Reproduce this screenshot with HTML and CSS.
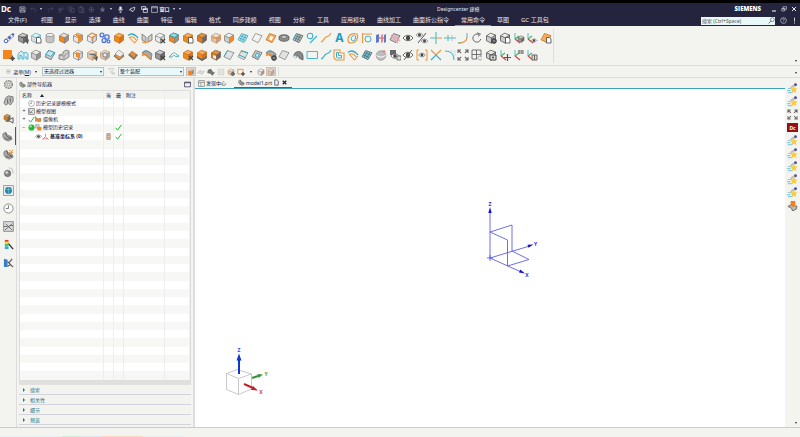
FILE: index.html
```html
<!DOCTYPE html>
<html lang="zh-CN">
<head>
<meta charset="utf-8">
<title>Designcenter 建模</title>
<link rel="stylesheet" href="styles.css">
</head>
<body>
<svg class="sprites" aria-hidden="true">
  <symbol id="cube" viewBox="0 0 12 12"><path class="t" d="M1.5 3.8 5.5 1.2l5 1.8-4 2.8z"/><path class="l" d="M1.5 3.8l5 2v5.4l-5-2.4z"/><path class="r" d="M6.500 5.800l4-2.800v5.200l-4 3z"/><path class="e" d="M1.500 3.800 5.500 1.200l5 1.800v5.200l-4 3-5-2.400zM1.500 3.800l5 2 4-2.800M6.500 5.800v5.400"/></symbol>
  <symbol id="sheet" viewBox="0 0 12 12"><path class="t" d="M4.500 1.500l6.500 2.200-4 7-6-3z"/><path class="e" d="M4.500 1.500l6.500 2.200-4 7-6-3z"/></symbol>
  <symbol id="mesh" viewBox="0 0 12 12"><path class="t" d="M4.500 1.500l6.500 2.200-4 7-6-3z"/><path class="e" d="M4.500 1.500l6.500 2.200-4 7-6-3zM6.500 2.200l-3.500 6.600M9 3l-4 6.800M3.300 3.700l6.400 2.400M2.100 5.800l6.200 2.600"/></symbol>
  <symbol id="cyl" viewBox="0 0 12 12"><path d="M2 3v6c0 2.400 8 2.400 8 0V3" fill="#c4c4c4" stroke="#888" stroke-width=".7"/><ellipse cx="6" cy="3" rx="4" ry="1.600" fill="#eee" stroke="#888" stroke-width=".7"/></symbol>
  <symbol id="ox" viewBox="0 0 12 12"><path d="M7 7l4 4M11 7l-4 4" stroke="#444" stroke-width="1.200"/></symbol>
  <symbol id="odoc" viewBox="0 0 12 12"><path d="M6.500 5.500h3l1.500 1.500v4h-4.500z" fill="#fff" stroke="#444" stroke-width=".8"/></symbol>
  <symbol id="ogear" viewBox="0 0 12 12"><circle cx="9" cy="9" r="2" fill="#ddd" stroke="#444" stroke-width="1.300"/><path d="M9 6v6M6 9h6" stroke="#444" stroke-width=".7"/></symbol>
  <symbol id="oarr" viewBox="0 0 12 12"><path d="M4 5.500c5-2 7 2 6.500 6M8 8l2.500 3 1-3.500" fill="none" stroke="#555" stroke-width="1.100"/></symbol>
  <symbol id="eye" viewBox="0 0 12 12"><path d="M1 6c2.500-3.600 7.500-3.600 10 0-2.500 3.600-7.500 3.600-10 0z" fill="#fff" stroke="#555" stroke-width=".9"/><circle cx="6" cy="6" r="2.200" fill="#444"/></symbol>
  <symbol id="axis" viewBox="0 0 12 12"><path d="M2 1v6" stroke="#52b8cc" stroke-width="1"/><path d="M2 7l4-3" stroke="#4db45a" stroke-width="1.200"/><path d="M2 7l5 4" stroke="#d8434a" stroke-width="1.200"/></symbol>
  <symbol id="expand" viewBox="0 0 12 12"><path d="M1 4V1h3M8 1h3v3M11 8v3H8M4 11H1V8M1 1l3.200 3.200M11 1 7.800 4.200M11 11 7.800 7.800M1 11l3.200-3.200" fill="none" stroke="#666" stroke-width="1.100"/></symbol>
  <symbol id="tick" viewBox="0 0 12 12"><path d="M1 6.500l3.500 4L11 1.500" fill="none" stroke="#19c332" stroke-width="1.700"/></symbol>
  <symbol id="gear" viewBox="0 0 12 12"><circle cx="6" cy="6" r="4.300" fill="none" stroke="#8b8b8b" stroke-width="1.400" stroke-dasharray="2 .7"/><circle cx="6" cy="6" r="3.200" fill="none" stroke="#888" stroke-width=".7"/><circle cx="6" cy="6" r="1.500" fill="none" stroke="#888" stroke-width=".9"/></symbol>
  <symbol id="clock" viewBox="0 0 12 12"><circle cx="6" cy="6" r="5" fill="#fff" stroke="#777" stroke-width=".9"/><path d="M6 2.500V6H3" fill="none" stroke="#666" stroke-width=".9"/></symbol>
  <symbol id="part" viewBox="0 0 12 12"><path d="M1 3l3-1.500 2 3 4 1.500 1 3-4 2-4-1.500-2-3z" fill="#aaa" stroke="#666" stroke-width=".7"/><path d="M4 1.500l1 4 5 2.500M3 7.500l3 1.500 4-1" fill="none" stroke="#555" stroke-width=".9"/></symbol>
  <symbol id="role" viewBox="0 0 12 12"><path d="M1 6h4M0 8.300h4M1 10.500h5" stroke="#8accE4" stroke-width="1.200"/><path d="M3 4.500l4-3 2 2-4 2z" fill="#c4beb0"/><circle cx="9.300" cy="2" r="1.600" fill="#4b4fa5"/><path d="M7.500 3.500l1.200 2.300 2.800.2-1.900 1.900.7 3-2.800-1.400-2.700 1.400.6-3-1.900-1.900 2.800-.2z" fill="#fccd3a"/></symbol>
  <symbol id="fan" viewBox="0 0 12 12"><path d="M1 3.500c3.500-3 7-1 10 2.500" fill="none" stroke="#31a9c4" stroke-width="1.300"/><path d="M2.500 5.500c2.500-1.500 5 0 6.500 2.500M2 5l5.500 6M7.500 11 11 7" fill="none" stroke="#ed963d" stroke-width="1.100"/></symbol>
  <symbol id="swirl" viewBox="0 0 12 12"><path d="M1 4c2-3 6-3 10 1l-1 6-3-3z" fill="#aaa" stroke="#666" stroke-width=".7"/><path d="M1 6.500c3-2 5-1 7 3" fill="none" stroke="#ef8b27" stroke-width="1.600"/><path d="M2 3c3-2 6-1 8 2" fill="none" stroke="#38adc6" stroke-width="1"/></symbol>
  <symbol id="turn" viewBox="0 0 12 12"><path d="M9.800 7a4 4 0 1 1-2-4.400M6 .8l3.500 1.300L7 4.500" fill="none" stroke="#666" stroke-width="1"/></symbol>
</svg>

<header class="chrome">
  <div class="titlebar">
    <strong class="logo">Dc</strong>
    <div class="quick">
      <button class="wide" aria-label="保存"><svg viewBox="0 0 12 12" stroke="#c9c9d6"><path d="M1.500 1.500h8l1 1v8h-9zM3.500 1.500v3h5v-3M3 10.500v-4h6v4M4 8h4"/></svg></button>
      <button aria-label="撤销"><svg viewBox="0 0 12 12" stroke="#53536c"><path d="M4 2 1.500 4.500 4 7M1.500 4.500h5c5 0 4 5 1 6"/></svg></button>
      <i class="dot"></i>
      <button class="wide" aria-label="重做"><svg viewBox="0 0 12 12" stroke="#53536c"><path d="M8 2l2.500 2.500L8 7M10.500 4.500h-5c-5 0-4 5-1 6"/></svg></button>
      <button aria-label="剪切"><svg viewBox="0 0 12 12" stroke="#53536c"><path d="M8 1 4 9M2 6l9-1"/><circle cx="3" cy="9.500" r="1.500"/><circle cx="2.500" cy="5.500" r="1.500"/></svg></button>
      <button aria-label="复制"><svg viewBox="0 0 12 12" stroke="#53536c"><path d="M1.500 1.500h5v7h-5zM4.500 4h6v7h-6z"/></svg></button>
      <button aria-label="粘贴"><svg viewBox="0 0 12 12" stroke="#53536c"><path d="M1.500 2h7v9h-7zM3.500 1h3v2h-3zM5.500 5h5v6h-5z"/></svg></button>
      <button aria-label="重复命令"><svg viewBox="0 0 12 12" stroke="#53536c"><path d="M6 1v10M1 6h10M3 3h6v6H3z"/></svg></button>
      <button class="wide" aria-label="收藏"><svg viewBox="0 0 12 12"><path d="M6 1l1.500 3.500 3.500.2-2.700 2.400.9 3.600L6 8.700l-3.200 2 .9-3.600L1 4.700l3.500-.2z" fill="#66667c"/></svg></button>
      <i class="dot"></i>
      <button class="wide" aria-label="语音"><svg viewBox="0 0 12 12" stroke="#e8e8ee"><path d="M4.500 1.500h3v5h-3z" fill="#e8e8ee"/><path d="M2.500 5c0 5 7 5 7 0M6 9v2.500M4 11.500h4"/></svg></button>
      <button class="wide" aria-label="触控"><svg viewBox="0 0 12 12" stroke="#e8e8ee" stroke-width="1.300"><path d="M1 7c0-3 4-3 6-4l3-1-1 5c-2 3-5 2-5 0zM5 10l2-2"/></svg></button>
      <button class="wide" aria-label="切换窗口"><svg viewBox="0 0 12 12" stroke="#e8e8ee" stroke-width="1.300"><path d="M1 1h7v5H1zM4 4h7v7H4zM4 6h7"/></svg></button>
      <button class="window" aria-label="窗口菜单"><svg viewBox="0 0 12 12" stroke="#e8e8ee"><path d="M1 1h10v10H1zM1 3h10"/></svg>窗口</button>
      <i class="dot"></i><i class="dot"></i>
    </div>
    <h1>Designcenter 建模</h1>
    <div class="winctl">
      <strong>SIEMENS</strong>
      <button aria-label="最小化"><svg viewBox="0 0 12 12" stroke="#fff" stroke-width="2"><path d="M2 10h8"/></svg></button>
      <button aria-label="还原"><svg viewBox="0 0 12 12" stroke="#fff"><path d="M4 1.500h7v5H4zM1.500 5h6v5h-6z"/></svg></button>
      <button aria-label="关闭"><svg viewBox="0 0 12 12" stroke="#fff" stroke-width="1.800"><path d="M2 2l8 8M10 2l-8 8"/></svg></button>
    </div>
  </div>
  <div class="menubar">
    <nav>
      <button class="file">文件(F)</button><button>视图</button><button>显示</button><button>选择</button><button>曲线</button><button>曲面</button><button>特征</button><button>编辑</button><button>格式</button><button>同步建模</button><button>视图</button><button>分析</button><button>工具</button><button>应用模块</button><button>曲线加工</button><button>曲面拆公指令</button><button class="active">常用命令</button><button>草图</button><button>GC 工具包</button>
    </nav>
    <div class="find">
      <input type="search" aria-label="搜索" placeholder="搜索 (Ctrl+Space)">
      <svg viewBox="0 0 12 12"><circle cx="7.500" cy="4.500" r="3.300" fill="none" stroke="#444"/><path d="M5 7l-4 4" stroke="#444" stroke-width="1.300"/></svg>
    </div>
    <button class="help" aria-label="帮助"><svg viewBox="0 0 12 12"><circle cx="6" cy="6" r="5" fill="none" stroke="#ddd"/><path d="M4.500 4.500c0-2 3-2 3 0 0 1-1.500 1-1.500 2.500M6 8v1.200" fill="none" stroke="#ddd"/></svg></button>
    <button class="help" aria-label="提示"><svg viewBox="0 0 12 12"><path d="M6 1v7M6 9.500v2" stroke="#ddd" stroke-width="1.500"/></svg></button>
  </div>
</header>

<section class="ribbon" aria-label="常用命令">
  <div class="tools">
    <button aria-label="基准"><svg viewBox="0 0 12 12"><path d="M2 8l7-6M4 10l7-6" stroke="#999"/><circle cx="3" cy="9" r="1.800" fill="#fff" stroke="#3f62ce"/><circle cx="6.500" cy="5.500" r="1.500" fill="#3f62ce"/><circle cx="10" cy="2.500" r="1.200" fill="#3f62ce"/></svg></button>
    <button aria-label="草图"><svg viewBox="0 0 12 12" class="dark"><use href="#cube"/><use href="#oarr"/></svg></button>
    <button aria-label="抽取"><svg viewBox="0 0 12 12" class="cyan"><use href="#cube"/><use href="#odoc"/></svg></button>
    <button aria-label="圆柱"><svg viewBox="0 0 12 12"><use href="#cyl"/></svg></button>
    <button aria-label="拉伸"><svg viewBox="0 0 12 12" class="mix"><use href="#cube"/></svg></button>
    <button aria-label="求和"><svg viewBox="0 0 12 12"><g class="wire"><use href="#cube"/></g><path d="M4 2l6 1v5l-4 2V5L4 4z" fill="#f28a25"/></svg></button>
    <button aria-label="边倒圆"><svg viewBox="0 0 12 12" class="wire"><use href="#cube"/><path d="M2 4l4-3 5 2-5 2v4" fill="none" stroke="#ed8a2d"/></svg></button>
    <button aria-label="阵列"><svg viewBox="0 0 12 12" fill="#dfe4fa" stroke="#4068d6" stroke-width="1.100"><circle cx="3" cy="3" r="2"/><circle cx="8" cy="5" r="2.200"/><circle cx="5" cy="8.500" r="2"/><circle cx="9.500" cy="9.500" r="1.500"/></svg></button>
    <button aria-label="长方体"><svg viewBox="0 0 12 12" class="orange"><use href="#cube"/></svg></button>
    <button aria-label="扫掠"><svg viewBox="0 0 12 12"><use href="#fan"/></svg></button>
    <button aria-label="镜像"><svg viewBox="0 0 12 12"><path d="M1 2l4 3v5L1 8zM11 2L7 5v5l4-2z" fill="#ccc" stroke="#777" stroke-width=".8"/><path d="M1 10l4 1 6-3" fill="none" stroke="#ef8b27"/></svg></button>
    <button aria-label="删除面"><svg viewBox="0 0 12 12" class="wire"><use href="#cube"/><use href="#ox"/></svg></button>
    <button aria-label="偏置面"><svg viewBox="0 0 12 12" class="mix"><use href="#cube"/><path d="M1.500 3.500 5.500 1l5 2-4 2.500z" fill="#9edae6" stroke="#279fb9"/></svg></button>
    <button aria-label="复制面"><svg viewBox="0 0 12 12" class="orange"><use href="#cube"/><use href="#odoc"/></svg></button>
    <button aria-label="替换面"><svg viewBox="0 0 12 12" class="burnt"><use href="#cube"/></svg></button>
    <button aria-label="阵列面"><svg viewBox="0 0 12 12" class="rim"><use href="#cube"/><path d="M2 6h9" stroke="#ed8a2d"/></svg></button>
    <button aria-label="拔模"><svg viewBox="0 0 12 12" class="gray"><use href="#cube"/><path d="M6.500 6l4-3v5l-4 3z" fill="#f28a25"/></svg></button>
    <button aria-label="通过网格"><svg viewBox="0 0 12 12" class="sea"><use href="#mesh"/></svg></button>
    <button aria-label="有界平面"><svg viewBox="0 0 12 12" class="wire"><use href="#sheet"/></svg></button>
    <button aria-label="修剪片体"><svg viewBox="0 0 12 12" class="orange"><use href="#sheet"/><path d="M5.500 4l3 1-2 3.500-2.500-1z" fill="#fff"/></svg></button>
    <button aria-label="管"><svg viewBox="0 0 12 12"><path d="M1 5c0-3 10-3 10 0v2c0 3-10 3-10 0z" fill="#8b8b8b" stroke="#555" stroke-width=".8"/><ellipse cx="6" cy="5" rx="3" ry="1.200" fill="#eee" stroke="#555" stroke-width=".7"/></svg></button>
    <button aria-label="缝合"><svg viewBox="0 0 12 12" class="dark"><use href="#mesh"/><path d="M4.500 1.500l-3 5.500M8 3l-3 6" stroke="#35abc6"/></svg></button>
    <button aria-label="直线和圆"><svg viewBox="0 0 12 12" fill="none" stroke="#3bb0cb" stroke-width="1.100"><circle cx="4" cy="4" r="2.800"/><path d="M4 11l7-7"/></svg></button>
    <button aria-label="艺术样条"><svg viewBox="0 0 12 12" fill="none" stroke="#ed963d" stroke-width="1.100"><path d="M1 10c3-1 3-4 5-5s3 0 5-4"/></svg></button>
    <button class="letter">A</button>
    <button aria-label="桥接曲线"><svg viewBox="0 0 12 12" fill="none"><path d="M1 8c0-6 5-7 9-6 2 4-1 9-6 9-2 0-3-1-3-3z" stroke="#ed963d" stroke-width="1.200"/><path d="M4 7c0-3 3-4 4.500-3 1 3-1 5-3 5z" stroke="#3bb0cb"/></svg></button>
    <button aria-label="投影曲线"><svg viewBox="0 0 12 12" fill="none"><path d="M1.500 1v10M1 2h10" stroke="#ed963d" stroke-width="1.100"/><circle cx="7" cy="7" r="3" stroke="#3bb0cb"/></svg></button>
    <button aria-label="测量"><svg viewBox="0 0 12 12"><path d="M1 3l3-1v8l-3 1z" fill="#6379c7"/><path d="M4 6h5" stroke="#d23b41"/><path d="M6 3l2-1v8l-2 1z" fill="#e8868b"/><path d="M9 3l2-1v8l-2 1z" fill="#6379c7"/></svg></button>
    <button aria-label="截面分析"><svg viewBox="0 0 12 12" class="dark"><use href="#sheet"/><path d="M2 3l7 8M4 2l7 7" stroke="#eaa6b0" stroke-width="1.500"/></svg></button>
    <button aria-label="显示"><svg viewBox="0 0 12 12"><use href="#eye"/></svg></button>
    <button aria-label="反转显示"><svg viewBox="0 0 12 12"><use href="#eye" x="-1" y="-1" width="9" height="8"/><use href="#eye" x="4" y="5" width="9" height="8"/><path d="M10 1 2 11" stroke="#555"/></svg></button>
    <button aria-label="点"><svg viewBox="0 0 12 12"><path d="M6 0v12M0 6h6" stroke="#4ab8d0" stroke-width="1.100"/><path d="M6 6h6" stroke="#ed963d"/></svg></button>
    <button aria-label="分割曲线"><svg viewBox="0 0 12 12" fill="none"><path d="M0 6h12M4 3v6" stroke="#4ab8d0"/><path d="M8 3v6" stroke="#bbb"/></svg></button>
    <button aria-label="圆角"><svg viewBox="0 0 12 12" fill="none"><path d="M1 11c6 0 9-2 9-6" stroke="#ed963d" stroke-width="1.100"/><path d="M10 6V1M1 11h3" stroke="#4ab8d0"/></svg></button>
    <button aria-label="刷新"><svg viewBox="0 0 12 12"><use href="#turn"/></svg></button>
    <button aria-label="组件设置"><svg viewBox="0 0 12 12" class="ink"><use href="#cube"/><use href="#ogear"/></svg></button>
    <button aria-label="组件复制"><svg viewBox="0 0 12 12" class="ink"><use href="#cube"/><use href="#odoc"/></svg></button>
    <button aria-label="移动组件"><svg viewBox="0 0 12 12" class="dark"><use href="#axis"/><use href="#cube" x="4" y="3" width="8" height="8"/></svg></button>
    <button aria-label="显示坐标系"><svg viewBox="0 0 12 12"><use href="#axis"/><use href="#eye" x="4" y="5" width="8" height="7"/></svg></button>
    <button aria-label="替换"><svg viewBox="0 0 12 12" class="orange"><use href="#sheet"/><use href="#odoc"/></svg></button>
    <button aria-label="新建"><svg viewBox="0 0 12 12"><path d="M0 1h9v9H0z" fill="#f28618"/><circle cx="9.500" cy="9.500" r="2" fill="#666"/><path d="M9.500 6.500v5.500M6.500 9.500H12" stroke="#555"/></svg></button>
    <button aria-label="几何链接"><svg viewBox="0 0 12 12" fill="#d9edf2" stroke="#48afc5" stroke-width=".9"><path d="M1 5l3-3 3 2v6H5V7L3 6v4H1zM7 4l2-1 2 2v5H9V7"/></svg></button>
    <button aria-label="块"><svg viewBox="0 0 12 12" class="gray"><use href="#cube"/></svg></button>
    <button aria-label="曲面加厚"><svg viewBox="0 0 12 12" class="dark"><use href="#sheet"/><path d="M1.500 5 5.500 1.500l5 2-4 4z" fill="#c8e8ef" stroke="#3aacc5"/></svg></button>
    <button aria-label="凸台"><svg viewBox="0 0 12 12"><path d="M1 6l4-1V3l3-2 3 1v6l-5 3-5-1z" fill="#ccc" stroke="#777" stroke-width=".8"/><path d="M1 6l5 1 5-4M6 7v4" fill="none" stroke="#888" stroke-width=".7"/></svg></button>
    <button aria-label="相交"><svg viewBox="0 0 12 12" class="wire"><use href="#cube"/><path d="M4 3l4 1v5l-4-1z" fill="#f28a25"/></svg></button>
    <button aria-label="倒斜角"><svg viewBox="0 0 12 12" class="rim"><use href="#cube"/><use href="#oarr"/></svg></button>
    <button aria-label="抽壳"><svg viewBox="0 0 12 12" class="rim"><use href="#cube"/><circle cx="6" cy="6" r="2.200" fill="#eee" stroke="#777"/></svg></button>
    <button aria-label="加厚"><svg viewBox="0 0 12 12"><path d="M1 7l4-4 6 4-5 4z" fill="#ef8b27" stroke="#666"/><path d="M2 5l4-4 5 4-4 3z" fill="#eee" stroke="#888" stroke-width=".7"/></svg></button>
    <button aria-label="修剪体"><svg viewBox="0 0 12 12"><path d="M1 6l4-4 6 4-4 5z" fill="#777"/><path d="M3 5l2-3 4 3-2 4z" fill="#f28a25"/></svg></button>
    <button aria-label="扫掠体"><svg viewBox="0 0 12 12"><use href="#swirl"/></svg></button>
    <button aria-label="删除体"><svg viewBox="0 0 12 12" class="dark"><use href="#cube"/><use href="#ox"/></svg></button>
    <button aria-label="桥接"><svg viewBox="0 0 12 12" fill="none" stroke="#48b2ca"><path d="M1 8l3-3c2-2 3-1 4 0l3 2-3 1c-1-2-3-2-4 0z"/></svg></button>
    <button aria-label="移除参数"><svg viewBox="0 0 12 12" class="orange"><use href="#cube"/><use href="#ox"/></svg></button>
    <button aria-label="移动面"><svg viewBox="0 0 12 12" class="orange"><use href="#cube"/><path d="M1 7l5 3 5-3v2l-5 3-5-3z" fill="#666"/></svg></button>
    <button aria-label="调整大小"><svg viewBox="0 0 12 12" class="burnt"><use href="#cube"/><path d="M3 6l3 1v3l-3-1z" fill="#eee"/></svg></button>
    <button aria-label="直纹"><svg viewBox="0 0 12 12" class="light"><use href="#sheet"/><path d="M4.500 1.500l-3.500 6" stroke="#35abc6"/></svg></button>
    <button aria-label="通过曲线组"><svg viewBox="0 0 12 12" class="light"><use href="#sheet"/><path d="M4 2l7 2M2 6l7 3" stroke="#35abc6"/></svg></button>
    <button aria-label="填充曲面"><svg viewBox="0 0 12 12" class="dark"><use href="#sheet"/><path d="M5.500 4l3 1-2 3.500-2.500-1z" fill="#bdeaf3" stroke="#35abc6"/></svg></button>
    <button aria-label="扩大"><svg viewBox="0 0 12 12"><use href="#swirl"/><use href="#ogear"/></svg></button>
    <button aria-label="偏置曲面"><svg viewBox="0 0 12 12" class="light"><use href="#sheet"/></svg></button>
    <button aria-label="弯管"><svg viewBox="0 0 12 12"><path d="M2 8c-1-6 8-8 9-1v4L7 9c0-3-2-3-3 0z" fill="#898989" stroke="#555" stroke-width=".8"/><circle cx="3" cy="8" r="1.500" fill="#c7e8ee"/></svg></button>
    <button aria-label="矩形"><svg viewBox="0 0 12 12"><path d="M1 2.500h10.500v7H1z" fill="none" stroke="#4ab8d0"/></svg></button>
    <button aria-label="样条"><svg viewBox="0 0 12 12"><path d="M1 10c3-1 3-4 5-5s3 0 5-4" fill="none" stroke="#3bb0cb" stroke-width="1.100"/></svg></button>
    <button aria-label="偏置曲线"><svg viewBox="0 0 12 12" fill="none"><path d="M1 1h6v3h4v7H3L1 9z" stroke="#ed963d" stroke-width="1.100"/><path d="M3.500 3.500h2v3h3V9h-4l-1-1z" stroke="#3bb0cb"/></svg></button>
    <button aria-label="相交曲线"><svg viewBox="0 0 12 12"><use href="#fan"/></svg></button>
    <button aria-label="网格曲面"><svg viewBox="0 0 12 12" class="deep"><use href="#mesh"/></svg></button>
    <button aria-label="球"><svg viewBox="0 0 12 12"><circle cx="6" cy="6.500" r="4.800" fill="#bdbdbd" stroke="#888" stroke-width=".6"/><path d="M1.500 6.500c3 2 6 2 9 0" fill="none" stroke="#fff"/><circle cx="9" cy="2.500" r="1.500" fill="#e08b95"/></svg></button>
    <button aria-label="编辑显示"><svg viewBox="0 0 12 12"><path d="M1 1h6v5H1z" fill="#666"/><use href="#eye" y="2" width="12" height="10"/><path d="M8 7h4v4H8z" fill="#ddd" stroke="#555" stroke-width=".7"/></svg></button>
    <button aria-label="隐藏"><svg viewBox="0 0 12 12"><use href="#eye"/><path d="M10 1 2 11" stroke="#666"/></svg></button>
    <button aria-label="仅显示"><svg viewBox="0 0 12 12"><use href="#eye" x="2" y="2" width="8" height="8"/><path d="M3 1H1v10h2M9 1h2v10H9" fill="none" stroke="#ed963d"/></svg></button>
    <button aria-label="修剪曲线"><svg viewBox="0 0 12 12"><path d="M1 1l5 5 5-5" fill="none" stroke="#ed963d" stroke-width="1.200"/><path d="M1 11l5-5 5 5" fill="none" stroke="#3bb0cb" stroke-width="1.200"/></svg></button>
    <button aria-label="圆弧"><svg viewBox="0 0 12 12"><path d="M1 2c6 0 9 3 9 9" fill="none" stroke="#4ab8d0" stroke-width="1.100"/><path d="M5 2h6v5" fill="none" stroke="#ddd"/></svg></button>
    <button aria-label="适合窗口"><svg viewBox="0 0 12 12"><use href="#expand"/></svg></button>
    <button aria-label="布局"><svg viewBox="0 0 12 12"><path d="M6 10H1V1h9v5M5.500 1v9M1 5.500h9" fill="none" stroke="#666" stroke-width=".9"/><use href="#turn" x="6" y="6" width="6" height="6"/></svg></button>
    <button aria-label="导出"><svg viewBox="0 0 12 12" class="ink"><use href="#cube"/><path d="M5 6h6v5H5z" fill="#ddd" stroke="#444"/><circle cx="8" cy="8.500" r="1" fill="#444"/></svg></button>
    <button aria-label="动态坐标系"><svg viewBox="0 0 12 12"><use href="#axis"/><path d="M8.500 5v7M5 8.500h7" stroke="#555" stroke-width="1.200"/></svg></button>
    <button aria-label="坐标系原点"><svg viewBox="0 0 12 12"><use href="#axis"/><path d="M5 2h6M5 4h6M6 1v4M9 1v4" stroke="#777"/></svg></button>
    <button aria-label="坐标系方位"><svg viewBox="0 0 12 12"><use href="#axis"/><path d="M6 6h5v5H6zM8.500 6v5" fill="#ddd" stroke="#666"/></svg></button>
  </div>
  <i class="more"></i>
</section>

<section class="selbar">
  <button class="menu"><svg viewBox="0 0 12 12"><path d="M1 2.500h10M1 6h10M1 9.500h10" stroke="#777"/></svg><span>菜单(<u>M</u>)</span><i class="dot"></i></button>
  <label class="filter"><select aria-label="类型过滤器"><option>无选择过滤器</option></select></label>
  <button aria-label="选择范围"><svg viewBox="0 0 12 12"><path d="M1 1h9L7 5v5L5 8V5zM8 8h3v3H8z" fill="none" stroke="#bbb"/></svg></button>
  <label class="filter scope"><select aria-label="范围"><option>整个装配</option></select></label>
  <div class="seltools">
    <button class="on" aria-label="启用捕捉"><svg viewBox="0 0 12 12"><path d="M2 4l5 1v6l-5-1z" fill="#ef7b18"/><path d="M7 5l3-3v6l-3 3z" fill="#888"/><path d="M2 4l4-2 4 0-3 3z" fill="#f6b070"/></svg></button>
    <button aria-label="链"><svg viewBox="0 0 12 12" fill="#ddd" stroke="#bbb"><path d="M1 7l4-4 2 3 4-1-4 5-2-2z"/></svg></button>
    <button aria-label="移动"><svg viewBox="0 0 12 12"><path d="M2 3l4-1 2 4 3 1-3 4-3-3-4-1z" fill="#777" stroke="#555"/></svg></button>
    <button aria-label="清除"><svg viewBox="0 0 12 12"><path d="M2 2h8v8H2zM3 3l6 6M9 3 3 9" fill="none" stroke="#c2c2c2"/></svg></button>
    <button aria-label="选择面"><svg viewBox="0 0 12 12" class="rim"><use href="#cube"/><use href="#ogear"/></svg></button>
    <button aria-label="矩形选择"><svg viewBox="0 0 12 12"><path d="M1 2h8v7H1z" fill="none" stroke="#ed8a2d" stroke-width="1.300"/><path d="M9 6v6M6 9h6" stroke="#333" stroke-width="1.500"/></svg></button>
    <i class="dot"></i>
    <button aria-label="高亮"><svg viewBox="0 0 12 12" class="wire"><use href="#cube"/><path d="M6.500 6l4-3v5l-4 3z" fill="#c58e67"/></svg></button>
    <button class="on" aria-label="着色"><svg viewBox="0 0 12 12" class="rim"><use href="#cube"/></svg></button>
  </div>
  <i class="more"></i>
</section>

<main>
  <nav class="rail" aria-label="资源条">
    <button aria-label="设置"><svg viewBox="0 0 12 12"><use href="#gear"/></svg></button>
    <button aria-label="装配导航器"><svg viewBox="0 0 12 12"><path d="M3 3l3-2 5 1v5l-3 4-2-2-3 2-2-2z" fill="#bbb" stroke="#777"/><path d="M5 4v5M8 3v5" stroke="#666"/></svg></button>
    <button aria-label="约束导航器"><svg viewBox="0 0 12 12"><g class="burnt"><use href="#cube" width="9" height="10"/></g><path d="M6 8l5-3v6zM3 9h4" fill="#eee" stroke="#555"/></svg></button>
    <button class="current" aria-label="部件导航器"><svg viewBox="0 0 12 12"><use href="#part"/></svg></button>
    <button aria-label="重用库"><svg viewBox="0 0 12 12"><use href="#part"/><path d="M7 1l2 2 2-2M9 3v3M6 4h5" fill="none" stroke="#ef8b27"/></svg></button>
    <button aria-label="视图管理器"><svg viewBox="0 0 12 12"><path d="M6 1c4 0 5 3 5 6" fill="none" stroke="#ccc" stroke-width="1.500"/><circle cx="5" cy="7" r="3.500" fill="#858585" stroke="#555" stroke-width=".6"/><circle cx="4" cy="6" r="1.400" fill="#ddd"/></svg></button>
    <button aria-label="浏览器"><svg viewBox="0 0 12 12"><path d="M.5.5h11v11H.5z" fill="#e6ecee" stroke="#999"/><circle cx="6" cy="6" r="3.800" fill="#2687a4"/><path d="M3 5h6M6 2.500v7" stroke="#75c2d0" stroke-width=".8"/></svg></button>
    <button aria-label="历史记录"><svg viewBox="0 0 12 12"><use href="#clock"/></svg></button>
    <button aria-label="工艺"><svg viewBox="0 0 12 12"><path d="M.7.700h10.600v10.600H.7z" fill="#ddd" stroke="#888"/><path d="M2 10l8-7M3 3l7 7M1 6h4M7 5h4" stroke="#666"/></svg></button>
    <button aria-label="颜色"><svg viewBox="0 0 12 12"><path d="M2 1h4v3H2z" fill="#f03a32"/><path d="M2 3h4v2H2z" fill="#f9e33c"/><path d="M2 5h4v3H2z" fill="#39d647"/><path d="M2 8h4v3H2z" fill="#29a9ee"/><path d="M6 5l5 6" stroke="#333" stroke-width="1.500"/></svg></button>
    <button aria-label="角色"><svg viewBox="0 0 12 12"><path d="M1 2l4 1v8H1z" fill="#397ec8"/><path d="M6 7l4-5M5 5l6 6M5 10l4-2" stroke="#555" stroke-width="1.200"/></svg></button>
  </nav>

  <aside class="panel">
    <header><svg viewBox="0 0 12 12"><use href="#part"/></svg><h2>部件导航器</h2><button aria-label="展开"><svg viewBox="0 0 12 12"><path d="M1 2h10v8H1zM1 3h10" fill="none" stroke="#335" stroke-width="1.300"/></svg></button></header>
    <div class="tree">
      <table>
        <colgroup><col class="c-name"><col class="c-flag"><col class="c-flag"><col class="c-note"><col></colgroup>
        <thead><tr><th>名称<span class="sort"></span></th><th class="mid">当</th><th class="mid">最</th><th>附注</th><th></th></tr></thead>
        <tbody>
          <tr><td><div class="node"><i class="tg"></i><svg viewBox="0 0 12 12"><use href="#clock"/></svg><span>历史记录建模模式</span></div></td><td></td><td></td><td></td><td></td></tr>
          <tr><td><div class="node"><i class="tg plus"></i><svg viewBox="0 0 12 12"><path d="M1 1h10v10H1z" fill="#eee" stroke="#555"/><path d="M3 9l6-6M3 3v5h5" fill="none" stroke="#555"/></svg><span>模型视图</span></div></td><td></td><td></td><td></td><td></td></tr>
          <tr><td><div class="node"><i class="tg plus"></i><svg viewBox="0 0 12 12"><use href="#tick"/></svg><svg viewBox="0 0 12 12"><path d="M1 1l3 4 6-1v5l-5 1-1-3-3 3z" fill="#e88b3a" stroke="#8c6d57"/></svg><span>摄像机</span></div></td><td></td><td></td><td></td><td></td></tr>
          <tr><td><div class="node"><i class="tg minus"></i><svg viewBox="0 0 12 12"><circle cx="6" cy="6" r="5.300" fill="#1fb838"/><circle cx="4.500" cy="4" r="2" fill="#9eeaa6"/></svg><svg viewBox="0 0 12 12"><path d="M1 1h6v6H1z" fill="#ccc" stroke="#a97"/><path d="M4 5h7v6H4z" fill="#f08020"/></svg><span>模型历史记录</span></div></td><td></td><td class="mid"><svg viewBox="0 0 12 12"><use href="#tick"/></svg></td><td></td><td></td></tr>
          <tr><td><div class="node child"><svg viewBox="0 0 12 12"><use href="#eye"/></svg><svg viewBox="0 0 12 12"><path d="M6 1v5l-5 5M6 6l5 5M1 10h10" fill="none" stroke="#e46c86" stroke-width="1.400"/></svg><b>基准坐标系 (0)</b></div></td><td class="mid"><svg viewBox="0 0 12 12"><path d="M3 1h6v10H3z" fill="#e8c4a8" stroke="#876"/><path d="M4 4h4M4 8h4" stroke="#c53"/></svg></td><td class="mid"><svg viewBox="0 0 12 12"><use href="#tick"/></svg></td><td></td><td></td></tr>
          <tr><td></td><td></td><td></td><td></td><td></td></tr><tr><td></td><td></td><td></td><td></td><td></td></tr><tr><td></td><td></td><td></td><td></td><td></td></tr><tr><td></td><td></td><td></td><td></td><td></td></tr><tr><td></td><td></td><td></td><td></td><td></td></tr>
          <tr><td></td><td></td><td></td><td></td><td></td></tr><tr><td></td><td></td><td></td><td></td><td></td></tr><tr><td></td><td></td><td></td><td></td><td></td></tr><tr><td></td><td></td><td></td><td></td><td></td></tr><tr><td></td><td></td><td></td><td></td><td></td></tr>
          <tr><td></td><td></td><td></td><td></td><td></td></tr><tr><td></td><td></td><td></td><td></td><td></td></tr><tr><td></td><td></td><td></td><td></td><td></td></tr><tr><td></td><td></td><td></td><td></td><td></td></tr><tr><td></td><td></td><td></td><td></td><td></td></tr>
          <tr><td></td><td></td><td></td><td></td><td></td></tr><tr><td></td><td></td><td></td><td></td><td></td></tr><tr><td></td><td></td><td></td><td></td><td></td></tr><tr><td></td><td></td><td></td><td></td><td></td></tr><tr><td></td><td></td><td></td><td></td><td></td></tr>
          <tr><td></td><td></td><td></td><td></td><td></td></tr><tr><td></td><td></td><td></td><td></td><td></td></tr><tr><td></td><td></td><td></td><td></td><td></td></tr><tr><td></td><td></td><td></td><td></td><td></td></tr><tr><td></td><td></td><td></td><td></td><td></td></tr>
          <tr><td></td><td></td><td></td><td></td><td></td></tr><tr><td></td><td></td><td></td><td></td><td></td></tr><tr><td></td><td></td><td></td><td></td><td></td></tr><tr><td></td><td></td><td></td><td></td><td></td></tr>
        </tbody>
      </table>
    </div>
    <div class="hscroll"></div>
    <button class="fold">搜索</button>
    <button class="fold">相关性</button>
    <button class="fold">细节</button>
    <button class="fold">预览</button>
  </aside>

  <section class="work">
    <div class="doctabs">
      <button><svg viewBox="0 0 12 12"><path d="M1 1h10v10H1zM1 4h10M5 4v7" fill="none" stroke="#666"/></svg>发现中心</button>
      <button class="active"><svg viewBox="0 0 12 12"><use href="#part"/></svg><span>model1.prt</span><svg viewBox="0 0 12 12"><path d="M3 1.500h4l2 2v7H3z" fill="none" stroke="#446" stroke-width="1.300"/></svg><svg viewBox="0 0 12 12"><path d="M3 3l6 6M9 3 3 9" stroke="#223" stroke-width="2.200"/></svg></button>
    </div>
    <svg class="view" viewBox="195 89 590 338" role="img" aria-label="图形窗口">
      <g fill="none" stroke="#5f5fe6" stroke-width=".9">
        <path d="M490 258v-46M490 258l38-11.500M490 258l30 13.500M490 232l22-7v26M490 232l17.500 8v26M512 251l17 8.500-21.500 6.500M487 258h6M490 255v6"/>
      </g>
      <g fill="#1414c8"><path d="M490 207l-1.700 6h3.400zM533.500 244.500l-6 .2 1 3zM525 273.500l-6-1 1.300-3z"/></g>
      <g class="ax" fill="#2d2dd8"><text x="490" y="206">Z</text><text x="535.500" y="246">Y</text><text x="527" y="277">X</text></g>
      <path d="M226.500 373.500l10.500-4 14.500 4.500-13 4.500zv16l12 5 13-5.500v-15M238.500 378.500v16" fill="none" stroke="#bbb" stroke-width=".8"/>
      <path d="M239 374v-15" stroke="#1038cc" stroke-width="2"/><path d="M239 353.500l-2.500 7h5z" fill="#1038cc"/>
      <path d="M252 378l6-2" stroke="#35963a" stroke-width="2"/><path d="M263 374.500l-5.500-.5 1 4z" fill="#35963a"/>
      <path d="M244 384l9 4" stroke="#c02228" stroke-width="2"/><path d="M258 390.500l-7-.5 2-4z" fill="#c02228"/>
      <g class="ax"><text x="239" y="352" fill="#2850e8">Z</text><text x="266" y="376" fill="#3aa845">Y</text><text x="261" y="394" fill="#d8343a">X</text></g>
    </svg>
  </section>

  <nav class="rail right" aria-label="角色工具">
    <button aria-label="角色 1"><svg viewBox="0 0 12 12"><use href="#role"/></svg></button>
    <button aria-label="角色 2"><svg viewBox="0 0 12 12"><use href="#role"/></svg></button>
    <button aria-label="全屏"><svg viewBox="0 0 12 12"><use href="#expand"/></svg></button>
    <button class="dc">Dc</button>
    <button aria-label="角色 3"><svg viewBox="0 0 12 12"><use href="#role"/></svg></button>
    <button aria-label="角色 4"><svg viewBox="0 0 12 12"><use href="#role"/></svg></button>
    <button aria-label="角色 5"><svg viewBox="0 0 12 12"><use href="#role"/></svg></button>
    <button aria-label="角色 6"><svg viewBox="0 0 12 12"><use href="#role"/></svg></button>
    <button aria-label="角色 7"><svg viewBox="0 0 12 12"><use href="#role"/></svg></button>
    <button aria-label="装配"><svg viewBox="0 0 12 12"><path d="M1 7l4-2 6 2-1 3-4 2-1-3z" fill="#bbb" stroke="#666"/><path d="M4 1h5v5l-2 2-3-2z" fill="#ef8119"/></svg></button>
    <i class="more"></i>
  </nav>
</main>
<footer></footer>
</body>
</html>
```
FILE: styles.css
```css
* { box-sizing: border-box; }
html, body { height: 100%; margin: 0; }
body {
  display: flex;
  flex-direction: column;
  background: #f3f3ef;
  color: #24243c;
  font: 5px/8px "Noto Sans", "Noto Sans CJK SC", sans-serif;
  overflow: hidden;
}
button {
  display: flex;
  align-items: center;
  justify-content: center;
  margin: 0;
  padding: 0;
  border: 0;
  background: none;
  color: inherit;
  font: inherit;
  white-space: nowrap;
}
svg { display: block; flex: none; }
h1, h2 { margin: 0; font: inherit; }
.sprites { position: absolute; width: 0; height: 0; }

/* Solid and sheet colours */
.t { fill: var(--t); }
.l { fill: var(--l); }
.r { fill: var(--r); }
.e { fill: none; stroke: var(--e); stroke-width: .7; }
.gray { --t: #eee; --l: #ccc; --r: #929292; --e: #777; }
.dark { --t: #ccc; --l: #999; --r: #6c6c6c; --e: #555; }
.ink { --t: #eee; --l: #ccc; --r: #aaa; --e: #444; }
.wire { --t: #f4f4f4; --l: #eaeaea; --r: #d0d0d0; --e: #777; }
.light { --t: #e2e2e2; --l: #ccc; --r: #bbb; --e: #777; }
.orange { --t: #fbab57; --l: #f58714; --r: #d57215; --e: #b8681c; }
.mix { --t: #e0e0e0; --l: #f58714; --r: #929292; --e: #8c7059; }
.burnt { --t: #f0912f; --l: #e67d18; --r: #686868; --e: #6f5f4f; }
.rim { --t: #e2e2e2; --l: #d2c8be; --r: #aaa; --e: #d48a4c; }
.cyan { --t: #dff2f6; --l: #ddd; --r: #c6c6c6; --e: #5aa9b9; }
.sea { --t: #b5e4ee; --l: #ccc; --r: #bbb; --e: #369fb7; }
.deep { --t: #7dc3d3; --l: #ccc; --r: #bbb; --e: #46656d; }

.dot {
  width: 0;
  height: 0;
  flex: none;
  border: 1px solid transparent;
  border-top: 2px solid currentColor;
  border-bottom: 0;
}
.more { position: absolute; right: 3px; bottom: 3px; border: 1px solid transparent; border-top: 2px solid #334; border-bottom: 0; }

/* Title and menus */
.chrome { border-top: 3px solid #000; background: #24243e; color: #e6e6ee; }
.titlebar { display: grid; grid-template-columns: 437px 1fr auto; align-items: center; height: 12px; }
.titlebar > .logo { grid-area: 1 / 1; padding-left: 1px; font-size: 8px; color: #fff; }
.quick { grid-area: 1 / 1; display: flex; align-items: center; padding-left: 16px; }
.quick button { width: 10px; }
.quick button.wide { width: 12px; }
.quick button.window { width: 21px; gap: 1px; font-weight: 700; }
.quick svg { width: 7px; height: 7px; fill: none; }
.quick .dot { margin: 0 2px; }
.winctl { display: flex; align-items: center; padding-right: 1px; }
.winctl strong { margin-right: 8px; font: 800 6px/8px "Open Sans", sans-serif; color: #fff; }
.winctl button { width: 10px; }
.winctl svg { width: 6px; height: 6px; fill: none; }
.menubar { display: flex; align-items: center; height: 11px; font-size: 6px; }
.menubar nav { display: flex; flex: 1; height: 11px; }
.menubar nav button { padding: 0 6px; border-bottom: 1px solid transparent; }
.menubar nav .file { padding: 0 8px; }
.menubar nav .active { border-color: #13d6b8; }
.find { display: flex; align-items: center; width: 74px; height: 8px; margin-right: 3px; background: #e9f8f9; }
.find input { flex: 1; min-width: 0; height: 8px; padding: 0 1px; border: 0; background: none; font: inherit; font-size: 5px; color: #444; }
.find input::placeholder { color: #555; }
.find svg { width: 7px; height: 7px; }
.help { width: 11px; }
.help svg { width: 7px; height: 7px; }

/* Command ribbon */
.ribbon { position: relative; padding: 3px 0 2px 2px; border-bottom: 1px solid #ddd; }
.tools { display: grid; grid-template-columns: repeat(40, 1fr); width: 552px; border-right: 1px solid #ddd; }
.tools button { height: 17px; }
.tools svg { width: 12px; height: 12px; }
.tools .letter { color: #1b9dc3; font: 700 12px/16px "Noto Sans", sans-serif; }

.selbar { position: relative; display: flex; align-items: center; height: 12px; padding-left: 1px; border-bottom: 1px solid #ddd; }
.menu { gap: 2px; width: 41px; }
.menu svg { width: 5px; height: 5px; }
.menu .dot { margin-left: 2px; }
.filter { position: relative; width: 62px; height: 9px; }
.filter.scope { width: 66px; }
.filter select { display: block; width: 100%; height: 9px; padding: 0 1px; border: 1px solid #b9c3c6; border-radius: 0; appearance: none; background: #e9f8fa; color: #223; font: inherit; line-height: 7px; }
.filter::after { content: ""; position: absolute; right: 2px; top: 4px; border: 1px solid transparent; border-top: 2px solid #223; border-bottom: 0; }
.selbar > button:not(.menu) { width: 14px; }
.selbar > button:not(.menu) svg { width: 7px; height: 7px; }
.seltools { display: flex; align-items: center; margin-left: 2px; padding-right: 2px; border-right: 1px solid #ddd; }
.seltools button { width: 10px; height: 9px; }
.seltools svg { width: 8px; height: 8px; }
.seltools .dot { margin: 0 4px; }
.seltools .on { background: #dcd6d0; box-shadow: inset 0 0 0 1px #c7c3be; }

/* Work area */
main { display: flex; flex: 1; min-height: 0; }
.rail { display: flex; flex-direction: column; width: 17px; border-right: 1px solid #ddd; }
.rail button { height: 18px; }
.rail button:first-child { height: 13px; }
.rail svg { width: 11px; height: 11px; }
.rail .current { border-right: 1px solid #1c6b75; }
.rail.right { position: relative; width: 15px; padding-top: 4px; border: 0; }
.rail.right button, .rail.right button:first-child { height: 13px; margin: 0 1px; }
.rail.right .dc { height: 9px; margin: 2px; background: #960f14; color: #fff; font-weight: 700; }

.panel { display: flex; flex-direction: column; width: 176px; padding: 0 2px 2px 2px; }
.panel > header { display: flex; align-items: center; gap: 1px; height: 12px; }
.panel > header svg { width: 7px; height: 7px; }
.panel h2 { flex: 1; }
.tree { flex: 1; min-height: 0; border: 1px solid #ddd; background: #fff; }
table { width: 100%; height: 100%; table-layout: fixed; border-collapse: separate; border-spacing: 0; line-height: 7px; }
.c-name { width: 84px; }
.c-flag { width: 10px; }
.c-note { width: 41px; }
th, td { height: 8px; padding: 0; border-right: 1px solid #eee; overflow: hidden; white-space: nowrap; }
th { padding-left: 2px; background: #f3f3f0; font-weight: 400; text-align: left; }
th.mid { padding: 0; text-align: center; }
tbody tr:nth-child(even) { background: #f7f7f5; }
.sort { display: inline-block; margin-left: 8px; border: 2px solid transparent; border-top: 0; border-bottom: 3px solid #223; }
.node { display: flex; align-items: center; height: 7px; }
td svg { width: 7px; height: 7px; }
td.mid svg { margin: 0 auto; }
.node span, .node b { margin-left: 1px; }
.child { padding-left: 15px; }
.tg { display: flex; justify-content: center; width: 8px; font-style: normal; }
.plus::before { content: "+"; }
.minus::before { content: "−"; }
.hscroll { height: 4px; background: #e0e0dd; }
.fold { justify-content: flex-start; gap: 5px; height: 10px; padding: 1px 0 0 4px; border-bottom: 1px solid #d3d3dd; color: #16788a; }
.fold::before { content: ""; border: 2px solid transparent; border-left: 2px solid #16788a; border-right: 0; }

.work { display: flex; flex: 1; flex-direction: column; min-width: 0; border-left: 2px solid #ddd; background: #fff; }
.doctabs { display: flex; height: 11px; border-bottom: 1px solid #3ba3b8; background: #f3f3ef; }
.doctabs button { gap: 1px; padding: 0 4px; }
.doctabs button:first-child { padding: 0 8px 0 3px; }
.doctabs svg { width: 7px; height: 7px; }
.doctabs .active { border-bottom: 1px solid #14778c; }
.view { flex: 1; width: 100%; min-height: 0; }
.ax { font: 700 5px "Open Sans", sans-serif; text-anchor: middle; }

footer { height: 10px; border-top: 1px solid #ccc; background: linear-gradient(90deg, #e6f0f2 62px, #d4ead2 62px 80px, #dce8ea 80px 102px, #f7d9c2 102px 143px, #e6eef0 143px 184px, #f3f3ef 184px) bottom / 100% 1px no-repeat; }
```
